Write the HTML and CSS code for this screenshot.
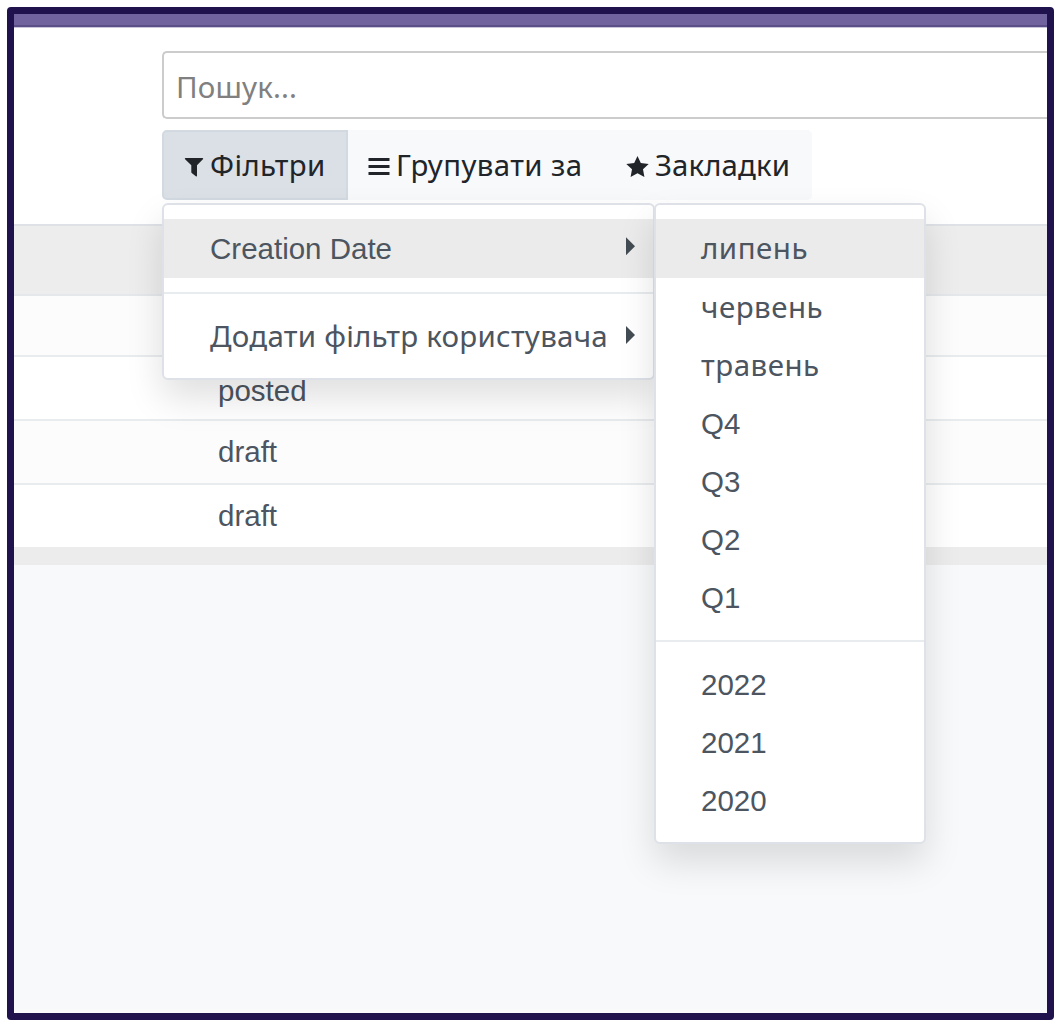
FILE: index.html
```html
<!DOCTYPE html>
<html lang="uk">
<head>
<meta charset="utf-8">
<title>Фільтри</title>
<link rel="stylesheet" href="styles.css">
</head>
<body>
<div class="frame">
  <header class="navbar"></header>
  <section class="control-panel">
    <div class="search">Пошук...</div>
    <div class="toolbar">
      <button class="btn btn-filter active"><svg class="icon" width="20" height="22" viewBox="0 0 20 22"><path d="M1.500 2h17c.7 0 .9.800.4 1.300L13 9.200V19.800c0 .7-.7.900-1.200.5L7.700 16.900c-.3-.3-.4-.5-.4-.9V9.200L1.100 3.300C.6 2.800.8 2 1.500 2z"/></svg><span>Фільтри</span></button>
      <button class="btn btn-group"><svg class="icon" width="22" height="22" viewBox="0 0 22 22"><path d="M.5 2h21v3.100H.5zM.5 9h21v3.100H.5zM.5 16h21v3.100H.5z"/></svg><span>Групувати за</span></button>
      <button class="btn btn-fav"><svg class="icon" width="23" height="22" viewBox="0 0 23 22"><path d="M11.500 0l3.300 6.900 7.900 1.100-5.700 5.300 1.400 7.600-6.900-3.700-6.900 3.700L6 13.300.3 8l7.900-1.100z"/></svg><span>Закладки</span></button>
    </div>
    <div class="menu menu-filters">
      <div class="item active"><span>Creation Date</span><i class="caret"></i></div>
      <div class="divider"></div>
      <div class="item item-custom"><span>Додати фільтр користувача</span><i class="caret"></i></div>
    </div>
    <div class="menu menu-dates">
      <div class="item month active">липень</div>
      <div class="item month">червень</div>
      <div class="item month">травень</div>
      <div class="item">Q4</div>
      <div class="item">Q3</div>
      <div class="item">Q2</div>
      <div class="item">Q1</div>
      <div class="divider"></div>
      <div class="item year">2022</div>
      <div class="item year">2021</div>
      <div class="item year">2020</div>
    </div>
  </section>
  <main class="list">
    <div class="list-head"></div>
    <div class="row odd"></div>
    <div class="row row-posted">posted</div>
    <div class="row odd">draft</div>
    <div class="row last">draft</div>
    <div class="list-foot"></div>
  </main>
</div>
</body>
</html>
```
FILE: styles.css
```css
* { box-sizing: border-box; }

body {
  margin: 0;
  padding: 7px 4px 5px 7px;
  height: 1025px;
  overflow: hidden;
  background: #fff;
  color: #4c5560;
  font-family: "Liberation Sans", "Noto Sans", sans-serif;
  font-size: 29.500px;
}

.frame {
  height: 1013px;
  border: 7px solid #20124d;
  border-radius: 4px;
  background: #f8f9fb;
}

.navbar {
  height: 13px;
  background: #71639e;
  border-bottom: 2px solid #5c4f88;
}

.control-panel {
  position: relative;
  height: 197px;
  padding: 23px 0 0 148px;
  background: #fff;
  border-top: 1px solid #c9c5da;
}

.search {
  height: 68px;
  padding: 2px 0 0 12px;
  border: 2px solid #ccc;
  border-right: 0;
  border-radius: 5px 0 0 5px;
  line-height: 64px;
  color: #808080;
  font-family: "Noto Sans", sans-serif;
  letter-spacing: .15px;
}

.toolbar {
  display: flex;
  width: 650px;
  height: 70px;
  margin-top: 11px;
  background: #f8f9fb;
  border-radius: 5px;
}

.btn {
  display: flex;
  align-items: center;
  gap: 6px;
  padding: 0;
  border: 0;
  background: none;
  color: #212529;
  font: 29.400px "Noto Sans", sans-serif;
  white-space: nowrap;
}

.btn span { line-height: 66px; padding-bottom: 1px; }
.btn-filter { width: 186px; padding-left: 20px; letter-spacing: .4px; }
.btn-filter.active { background: #dae0e6; border: 2px solid #d2d9e0; border-radius: 5px 0 0 5px; }
.btn-group { width: 256px; padding-left: 20px; letter-spacing: .4px; }
.btn-fav { padding-left: 22px; letter-spacing: .1px; }
.icon { flex: none; fill: currentColor; margin-top: 3px; }

.menu {
  position: absolute;
  top: 175px;
  padding-top: 14px;
  border: 2px solid #dee2e8;
  border-radius: 6px;
  background: #fff;
  background-clip: padding-box;
  box-shadow: 0 18px 36px rgba(0, 0, 0, .125);
}

.menu-filters { z-index: 2; left: 148px; width: 493px; height: 177px; }
.menu-dates { z-index: 3; left: 640px; width: 272px; height: 641px; }

.item {
  display: flex;
  align-items: center;
  justify-content: space-between;
  height: 58.100px;
  padding: 2px 18px 0 45px;
  white-space: nowrap;
}

.item.active { height: 58.500px; background: #ebebeb; }
.month, .item-custom { font-family: "Noto Sans", sans-serif; padding-top: 0; }
.month { padding-bottom: 1px; letter-spacing: .5px; }
.item-custom { padding-bottom: 3px; letter-spacing: .25px; }
.year { padding-top: 0; }
.menu-filters .item { padding-left: 46px; }
.divider { height: 2px; margin: 14px 0; background: #e9ecef; }

.caret {
  width: 9px;
  height: 18px;
  margin-bottom: 6px;
  background: #434b53;
  clip-path: polygon(0 0, 100% 50%, 0 100%);
}
.item-custom .caret { margin-bottom: 0; }

.row {
  height: 64px;
  padding-left: 204px;
  line-height: 62px;
  background: #fff;
  border-bottom: 2px solid #e9ecef;
}

.row.odd { background: #fcfcfc; }
.list-head { height: 72px; background: #ededed; border-top: 2px solid #dee2e6; border-bottom: 2px solid #e4e8eb; }
.list-head + .row { height: 61px; }
.row-posted { line-height: 67px; }
.row.last { height: 62px; border-bottom: 0; }
.list-foot { height: 18px; background: #ececec; }
```
